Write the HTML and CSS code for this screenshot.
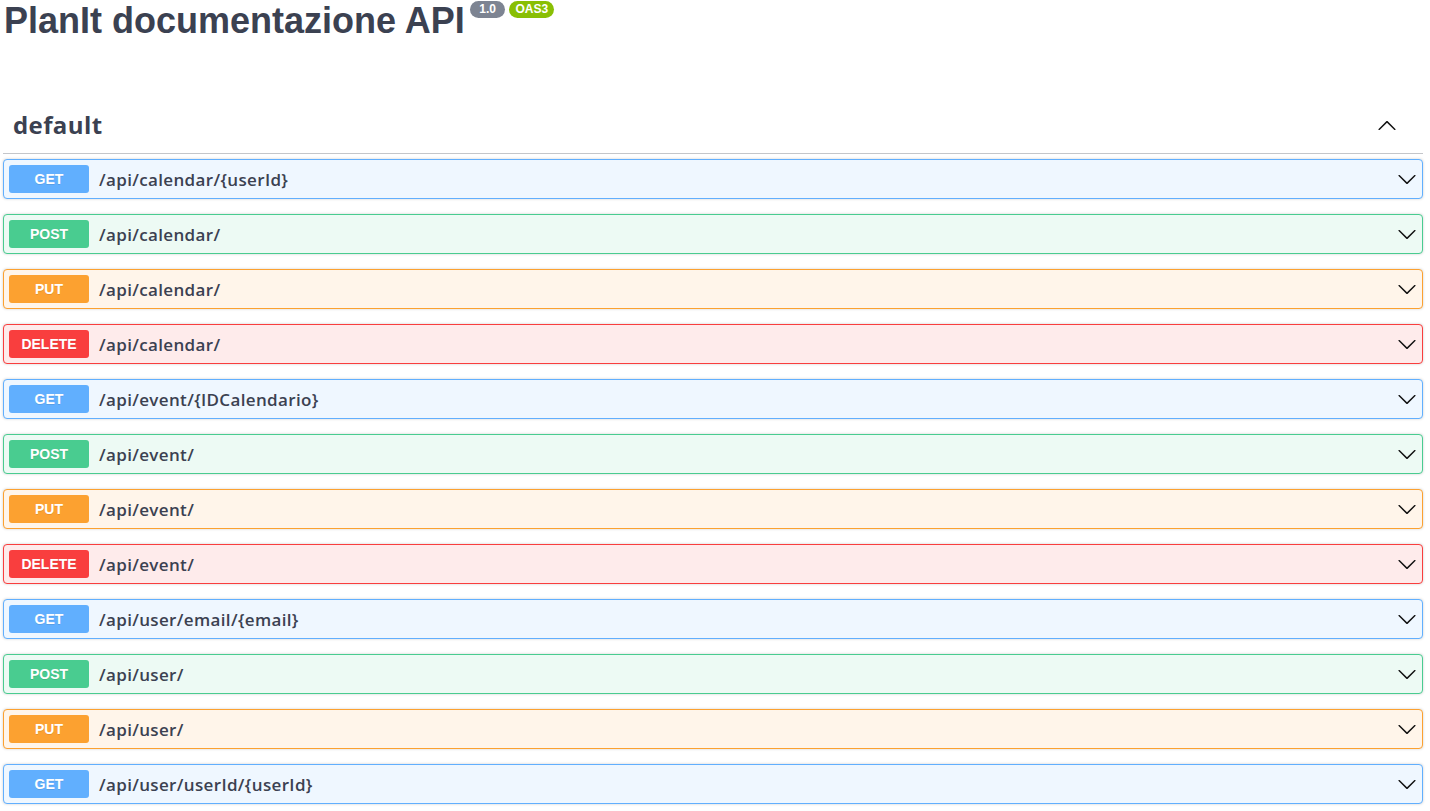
FILE: index.html
```html
<!DOCTYPE html>
<html lang="it">
<head>
<meta charset="utf-8">
<title>PlanIt documentazione API</title>
<link rel="stylesheet" href="styles.css">
</head>
<body>
<div class="wrapper">
  <div class="info">
    <h2 class="title">PlanIt documentazione API<span class="badges"><span class="badge version">1.0</span><span class="badge oas">OAS3</span></span></h2>
  </div>
  <section class="tag-section">
    <h3 class="tag">
      <span class="tag-name">default</span>
      <svg class="arrow-up" width="20" height="20" viewBox="0 0 20 20"><path d="M17.418 14.908c.272.268.709.268.979 0s.27-.701 0-.969l-7.908-7.83c-.27-.268-.707-.268-.979 0l-7.908 7.83c-.27.268-.27.701 0 .969.271.268.709.268.979 0L10 7.767l7.418 7.141z"/></svg>
    </h3>
    <div class="ops">
      <div class="op get"><span class="method">GET</span><span class="path">/api/calendar/{userId}</span><svg class="arrow" width="20" height="20" viewBox="0 0 20 20"><path d="M17.418 6.109c.272-.268.709-.268.979 0s.27.701 0 .969l-7.908 7.83c-.27.268-.707.268-.979 0l-7.908-7.83c-.27-.268-.27-.701 0-.969.271-.268.709-.268.979 0L10 13.25l7.418-7.141z"/></svg></div>
      <div class="op post"><span class="method">POST</span><span class="path">/api/calendar/</span><svg class="arrow" width="20" height="20" viewBox="0 0 20 20"><path d="M17.418 6.109c.272-.268.709-.268.979 0s.27.701 0 .969l-7.908 7.83c-.27.268-.707.268-.979 0l-7.908-7.83c-.27-.268-.27-.701 0-.969.271-.268.709-.268.979 0L10 13.25l7.418-7.141z"/></svg></div>
      <div class="op put"><span class="method">PUT</span><span class="path">/api/calendar/</span><svg class="arrow" width="20" height="20" viewBox="0 0 20 20"><path d="M17.418 6.109c.272-.268.709-.268.979 0s.27.701 0 .969l-7.908 7.83c-.27.268-.707.268-.979 0l-7.908-7.83c-.27-.268-.27-.701 0-.969.271-.268.709-.268.979 0L10 13.25l7.418-7.141z"/></svg></div>
      <div class="op delete"><span class="method">DELETE</span><span class="path">/api/calendar/</span><svg class="arrow" width="20" height="20" viewBox="0 0 20 20"><path d="M17.418 6.109c.272-.268.709-.268.979 0s.27.701 0 .969l-7.908 7.83c-.27.268-.707.268-.979 0l-7.908-7.830c-.27-.268-.27-.701 0-.969.271-.268.709-.268.979 0L10 13.25l7.418-7.141z"/></svg></div>
      <div class="op get"><span class="method">GET</span><span class="path">/api/event/{IDCalendario}</span><svg class="arrow" width="20" height="20" viewBox="0 0 20 20"><path d="M17.418 6.109c.272-.268.709-.268.979 0s.27.701 0 .969l-7.908 7.83c-.27.268-.707.268-.979 0l-7.908-7.83c-.27-.268-.27-.701 0-.969.271-.268.709-.268.979 0L10 13.25l7.418-7.141z"/></svg></div>
      <div class="op post"><span class="method">POST</span><span class="path">/api/event/</span><svg class="arrow" width="20" height="20" viewBox="0 0 20 20"><path d="M17.418 6.109c.272-.268.709-.268.979 0s.27.701 0 .969l-7.908 7.83c-.27.268-.707.268-.979 0l-7.908-7.83c-.27-.268-.27-.701 0-.969.271-.268.709-.268.979 0L10 13.25l7.418-7.141z"/></svg></div>
      <div class="op put"><span class="method">PUT</span><span class="path">/api/event/</span><svg class="arrow" width="20" height="20" viewBox="0 0 20 20"><path d="M17.418 6.109c.272-.268.709-.268.979 0s.27.701 0 .969l-7.908 7.83c-.27.268-.707.268-.979 0l-7.908-7.83c-.27-.268-.27-.701 0-.969.271-.268.709-.268.979 0L10 13.25l7.418-7.141z"/></svg></div>
      <div class="op delete"><span class="method">DELETE</span><span class="path">/api/event/</span><svg class="arrow" width="20" height="20" viewBox="0 0 20 20"><path d="M17.418 6.109c.272-.268.709-.268.979 0s.27.701 0 .969l-7.908 7.83c-.27.268-.707.268-.979 0l-7.908-7.83c-.27-.268-.27-.701 0-.969.271-.268.709-.268.979 0L10 13.25l7.418-7.141z"/></svg></div>
      <div class="op get"><span class="method">GET</span><span class="path">/api/user/email/{email}</span><svg class="arrow" width="20" height="20" viewBox="0 0 20 20"><path d="M17.418 6.109c.272-.268.709-.268.979 0s.27.701 0 .969l-7.908 7.83c-.27.268-.707.268-.979 0l-7.908-7.83c-.27-.268-.27-.701 0-.969.271-.268.709-.268.979 0L10 13.25l7.418-7.141z"/></svg></div>
      <div class="op post"><span class="method">POST</span><span class="path">/api/user/</span><svg class="arrow" width="20" height="20" viewBox="0 0 20 20"><path d="M17.418 6.109c.272-.268.709-.268.979 0s.27.701 0 .969l-7.908 7.83c-.27.268-.707.268-.979 0l-7.908-7.83c-.27-.268-.27-.701 0-.969.271-.268.709-.268.979 0L10 13.25l7.418-7.141z"/></svg></div>
      <div class="op put"><span class="method">PUT</span><span class="path">/api/user/</span><svg class="arrow" width="20" height="20" viewBox="0 0 20 20"><path d="M17.418 6.109c.272-.268.709-.268.979 0s.27.701 0 .969l-7.908 7.83c-.27.268-.707.268-.979 0l-7.908-7.83c-.27-.268-.27-.701 0-.969.271-.268.709-.268.979 0L10 13.25l7.418-7.141z"/></svg></div>
      <div class="op get"><span class="method">GET</span><span class="path">/api/user/userId/{userId}</span><svg class="arrow" width="20" height="20" viewBox="0 0 20 20"><path d="M17.418 6.109c.272-.268.709-.268.979 0s.27.701 0 .969l-7.908 7.83c-.27.268-.707.268-.979 0l-7.908-7.83c-.27-.268-.27-.701 0-.969.271-.268.709-.268.979 0L10 13.25l7.418-7.141z"/></svg></div>
    </div>
  </section>
</div>
</body>
</html>
```

FILE: styles.css
```css
html, body {
  margin: 0;
  padding: 0;
  background: #fff;
  color: #3b4151;
}

.wrapper {
  padding: 0 7px 0 3px;
}

.title {
  margin: 0;
  font-family: "Liberation Sans", Arial, sans-serif;
  font-size: 36px;
  font-weight: 700;
  line-height: 41px;
  color: #3b4151;
  padding-left: 1px;
  display: flex;
  align-items: flex-start;
}

.badges {
  display: flex;
  gap: 4px;
  margin-left: 5px;
  margin-top: 1px;
}

.badge {
  display: inline-block;
  font-family: "Liberation Sans", Arial, sans-serif;
  font-size: 12px;
  font-weight: 700;
  line-height: 13px;
  padding: 2px 9px;
  border-radius: 57px;
  color: #fff;
}

.badge.version {
  background: #7d8492;
  padding: 2px 9.5px;
}

.badge.oas {
  background: #89bf04;
  padding: 2px 6px;
}

.tag-section {
  margin-top: 56px;
}

.tag {
  margin: 0;
  display: flex;
  align-items: center;
  padding: 10px 20px 10px 10px;
  border-bottom: 1px solid rgba(59, 65, 81, 0.3);
  font-family: "Open Sans", sans-serif;
  font-size: 24px;
  font-weight: 700;
  line-height: 36px;
  letter-spacing: 0.4px;
  color: #3b4151;
}

.tag-name {
  flex: 1;
}

.arrow-up {
  fill: #111;
  margin-right: 6px;
}

.ops {
  padding-top: 5px;
}

.op {
  display: flex;
  align-items: center;
  height: 40px;
  box-sizing: border-box;
  padding: 0 5px;
  margin-bottom: 15px;
  border: 1px solid;
  border-radius: 4px;
  box-shadow: 0 0 3px rgba(0, 0, 0, 0.19);
}

.method {
  min-width: 80px;
  box-sizing: border-box;
  text-align: center;
  padding: 6px 0;
  border-radius: 3px;
  font-family: "Liberation Sans", Arial, sans-serif;
  font-size: 14px;
  font-weight: 700;
  line-height: 16px;
  color: #fff;
  text-shadow: 0 1px 0 rgba(0, 0, 0, 0.1);
}

.path {
  flex: 1;
  padding: 0 10px;
  font-family: "Open Sans", sans-serif;
  font-size: 17px;
  font-weight: 600;
  letter-spacing: 0.35px;
  color: #3b4151;
}

.arrow {
  fill: #111;
}

.op.get { background: #eff7ff; border-color: #61affe; }
.op.get .method { background: #61affe; }
.op.post { background: #edfaf4; border-color: #49cc90; }
.op.post .method { background: #49cc90; }
.op.put { background: #fff5ea; border-color: #fca130; }
.op.put .method { background: #fca130; }
.op.delete { background: #feebeb; border-color: #f93e3e; }
.op.delete .method { background: #f93e3e; }
```
